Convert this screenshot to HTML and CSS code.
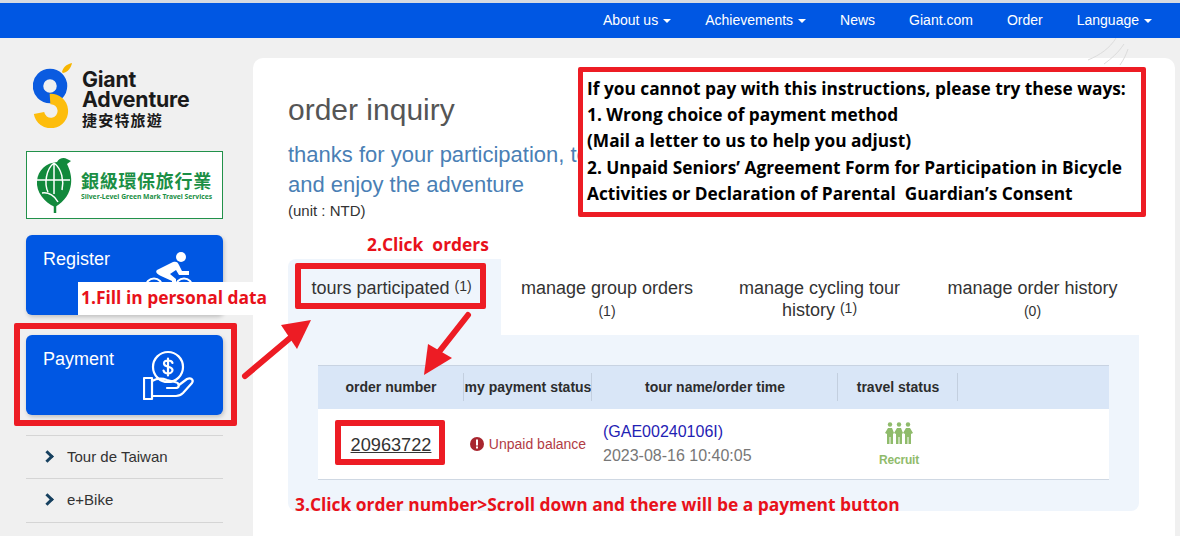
FILE: index.html
```html
<!DOCTYPE html>
<html lang="en">
<head>
    <meta charset="UTF-8">
    <title>order inquiry - Giant Adventure</title>
    <link rel="stylesheet" href="styles.css">
</head>
<body>
    <nav class="top-nav">
        <a href="#" class="caret">About us</a>
        <a href="#" class="caret">Achievements</a>
        <a href="#">News</a>
        <a href="#">Giant.com</a>
        <a href="#">Order</a>
        <a href="#" class="caret">Language</a>
    </nav>

    <svg class="nav-swirl" width="60" height="30" viewBox="0 0 60 30" fill="none" stroke="#dcdcdc" stroke-width="1">
        <path d="M46 0C40 10 30 17 18 22"/>
        <path d="M54 6C48 15 42 20 34 26"/>
        <path d="M58 11C56 17 54 21 50 27"/>
    </svg>

    <div class="page">
        <aside class="sidebar">
            <div class="logo">
                <svg class="logo-mark" width="39" height="66" viewBox="0 0 39 66" fill="none">
                    <path d="M29 10C30 5 34 2 39 1C38 6 35 10 30 11Z" fill="#f7b500"/>
                    <circle cx="17" cy="24" r="12" stroke="#0a5be0" stroke-width="10.500"/>
                    <path d="M17 37A12 12 0 1 1 6 51" stroke="#fdbd0d" stroke-width="10.500"/>
                </svg>
                <div class="logo-text">
                    <span class="logo-name">Giant<br>Adventure</span>
                    <span class="logo-zh">捷安特旅遊</span>
                </div>
            </div>

            <div class="green-badge">
                <svg width="36" height="56" viewBox="0 0 36 56">
                    <path d="M19 56V46" stroke="#12893c" stroke-width="2.500"/>
                    <path d="M19 50C8 45 0 35 1 24C2 13 10 6 21 5C23 1 28 0 31 2L35 4L31 7C34 13 36 20 35 27C34 36 29 44 19 50Z" fill="#12893c"/>
                    <path d="M1 23H34M18 6V37M18 6C10 12 8 27 12 35M18 6C26 12 28 24 26 33M6 36C13 35 19 39 22 45" stroke="#fff" stroke-width="1.500" fill="none"/>
                </svg>
                <div class="green-badge-text">
                    <strong>銀級環保旅行業</strong>
                    <small>Silver-Level Green Mark Travel Services</small>
                </div>
            </div>

            <a href="#" class="side-btn">
                <span>Register</span>
                <svg class="side-icon" width="52" height="52" viewBox="0 0 52 52" fill="#fff">
                    <circle cx="38" cy="7" r="5"/>
                    <path d="M14 20L30 12C33 11 35 12 36 15L39 21H46V25H36L33 20L27 24L33 29V40H29V31L18 26C14 24 12 22 14 20Z"/>
                    <circle cx="11" cy="37" r="8.500" fill="none" stroke="#fff" stroke-width="2"/>
                    <circle cx="41" cy="37" r="8.500" fill="none" stroke="#fff" stroke-width="2"/>
                </svg>
            </a>
            <a href="#" class="side-btn">
                <span>Payment</span>
                <svg class="side-icon" width="52" height="52" viewBox="0 0 52 52" fill="none" stroke="#fff" stroke-width="2.200" stroke-linejoin="round" stroke-linecap="round">
                    <circle cx="25" cy="17" r="15"/>
                    <path d="M29.500 13C29 11 27 10.500 25 10.500C22.500 10.500 21 12 21 13.500C21 18 29.500 15.500 29.500 20C29.500 22 27.500 23.500 25 23.500C22.500 23.500 21 22.500 20.500 20.500M25 8.500V25.500"/>
                    <path d="M1 28H9V49H1Z"/>
                    <path d="M9 31C14 28 19 28 24 30L32 32C37 33 37 38 32 38H24"/>
                    <path d="M36 35L44 29C48 27 51 30 49 33L40 43C38 45 36 46 33 46H9"/>
                </svg>
            </a>

            <ul class="side-list">
                <li>Tour de Taiwan</li>
                <li>e+Bike</li>
            </ul>
        </aside>

        <main class="main-card">
            <h1 class="page-title">order inquiry</h1>
            <p class="page-lead">thanks for your participation, to<br>and enjoy the adventure</p>
            <p class="unit-note">(unit : NTD)</p>

            <div class="tabs">
                <div class="tab active">tours participated <sup>(1)</sup></div>
                <div class="tab">manage group orders<br><sup>(1)</sup></div>
                <div class="tab">manage cycling tour history <sup>(1)</sup></div>
                <div class="tab">manage order history<br><sup>(0)</sup></div>
            </div>

            <div class="tab-panel">
                <div class="order-table">
                    <div class="cell head">order number</div>
                    <div class="cell head">my payment status</div>
                    <div class="cell head">tour name/order time</div>
                    <div class="cell head">travel status</div>
                    <div class="cell head blank"></div>

                    <div class="cell"><a href="#" class="order-no">20963722</a></div>
                    <div class="cell unpaid">
                        <svg width="14" height="14" viewBox="0 0 14 14"><circle cx="7" cy="7" r="7" fill="#a8262f"/><rect x="6" y="2.500" width="2" height="6" fill="#fff"/><rect x="6" y="9.500" width="2" height="2" fill="#fff"/></svg>
                        Unpaid balance
                    </div>
                    <div class="cell tour-cell">
                        <a href="#">(GAE00240106I)</a>
                        <span>2023-08-16 10:40:05</span>
                    </div>
                    <div class="cell recruit">
                        <svg width="28" height="23" viewBox="0 0 28 23" fill="#8fbb6b">
                            <circle cx="5" cy="2.500" r="2.200"/><circle cx="14" cy="2.500" r="2.200"/><circle cx="23" cy="2.500" r="2.200"/>
                            <path d="M3 6H7L9 11L8 12V22H5.500V15H4.500V22H2V12L0 11Z"/>
                            <path d="M12 6H16L18 11L17 12V22H14.500V15H13.500V22H11V12L9 11Z"/>
                            <path d="M21 6H25L28 11L26 12V22H23.500V15H22.500V22H20V12L18 11Z"/>
                        </svg>
                        <span>Recruit</span>
                    </div>
                    <div class="cell"></div>
                </div>
            </div>
        </main>
        <div class="right-edge"></div>
    </div>

    <!-- notes drawn over the screenshot -->
    <div class="note-frame frame-payment"></div>
    <div class="note-frame frame-tab"></div>
    <div class="note-frame frame-number"></div>
    <svg class="note-arrows" width="1180" height="536" viewBox="0 0 1180 536" fill="#ed1c24" stroke="#ed1c24" stroke-linecap="round">
        <path d="M245 376L296 333" stroke-width="6" fill="none"/>
        <path d="M311 320L281 325L297 349Z" stroke="none"/>
        <path d="M468 315L435 357" stroke-width="6" fill="none"/>
        <path d="M424 375L428 344L452 358Z" stroke="none"/>
    </svg>
    <div class="note-box">
        If you cannot pay with this instructions, please try these ways:<br>
        1. Wrong choice of payment method<br>
        (Mail a letter to us to help you adjust)<br>
        2. Unpaid Seniors’ Agreement Form for Participation in Bicycle<br>
        Activities or Declaration of Parental&nbsp; Guardian’s Consent
    </div>
    <div class="note-text note-one">1.Fill in personal data</div>
    <div class="note-text note-two">2.Click&nbsp; orders</div>
    <div class="note-text note-three">3.Click order number&gt;Scroll down and there will be a payment button</div>
</body>
</html>
```

FILE: styles.css
```css
html, body {
    height: 536px;
    overflow: hidden;
}
body {
    margin: 0;
    position: relative;
    background-color: #f0f0f0;
    color: #333;
    font-family: 'Liberation Sans', sans-serif;
    border-top: 3px solid #d6dbe2;
    box-sizing: border-box;
}
a {
    text-decoration: none;
}
.top-nav {
    display: flex;
    justify-content: flex-end;
    align-items: center;
    gap: 34px;
    height: 35px;
    padding-right: 28px;
    padding-bottom: 2px;
    box-sizing: border-box;
    background-color: #0057e3;
}
.top-nav a {
    color: #fff;
    font-size: 14px;
}
.caret::after {
    content: "";
    display: inline-block;
    margin-left: 5px;
    vertical-align: 2px;
    border-top: 4px solid #fff;
    border-left: 4px solid transparent;
    border-right: 4px solid transparent;
}
.nav-swirl {
    position: absolute;
    top: 35px;
    left: 1070px;
}
.page {
    display: flex;
    align-items: flex-start;
    padding: 20px 0 0 26px;
}
.sidebar {
    width: 197px;
    flex-shrink: 0;
}
.logo {
    display: flex;
    align-items: flex-start;
    gap: 10px;
    height: 66px;
    margin: 4px 0 23px 7px;
}
.logo-text {
    display: flex;
    flex-direction: column;
    margin-top: 7px;
    color: #1a1a1a;
    font-family: 'Inter', sans-serif;
    font-weight: 700;
}
.logo-name {
    font-size: 21.300px;
    line-height: 20px;
    letter-spacing: -0.2px;
}
.logo-zh {
    margin-top: 2px;
    font-family: 'Noto Sans CJK TC', sans-serif;
    font-size: 15px;
    line-height: 18px;
    letter-spacing: 1.200px;
}
.green-badge {
    display: flex;
    align-items: center;
    gap: 9px;
    height: 68px;
    padding-left: 9px;
    box-sizing: border-box;
    background-color: #fff;
    border: 1px solid #22914a;
}
.green-badge-text {
    display: flex;
    flex-direction: column;
    margin-top: -1px;
    color: #1b8f45;
}
.green-badge-text strong {
    font-family: 'Noto Sans CJK TC', sans-serif;
    font-size: 18px;
    line-height: 24px;
    letter-spacing: 0.700px;
}
.green-badge-text small {
    font-family: 'Noto Sans', sans-serif;
    font-size: 6.750px;
    font-weight: 700;
    white-space: nowrap;
}
.side-btn {
    display: block;
    position: relative;
    height: 80px;
    margin-top: 20px;
    padding: 14px 17px;
    box-sizing: border-box;
    background-color: #0057e3;
    border-radius: 6px;
    box-shadow: 1px 2px 4px rgba(0,0,0,0.2);
    color: #fff;
    font-size: 18px;
}
.green-badge + .side-btn {
    margin-top: 16px;
}
.side-icon {
    position: absolute;
    right: 28px;
    top: 15px;
}
.side-list {
    list-style: none;
    margin: 20px 0 0;
    padding: 0;
    border-top: 1px solid #d5d5d5;
}
.side-list li {
    position: relative;
    height: 42px;
    padding-left: 41px;
    border-bottom: 1px solid #d5d5d5;
    color: #333;
    font-size: 15px;
    line-height: 41px;
}
.side-list li:last-child {
    height: 43px;
}
.side-list li::before {
    content: "";
    position: absolute;
    left: 17px;
    top: 16px;
    width: 6px;
    height: 6px;
    border-top: 3px solid #16405f;
    border-right: 3px solid #16405f;
    transform: rotate(45deg);
}
.main-card {
    width: 922px;
    height: 500px;
    flex-shrink: 0;
    margin-left: 30px;
    padding: 35px 36px 0 35px;
    box-sizing: border-box;
    background-color: #fff;
    border-radius: 10px;
}
.page-title {
    margin: 0;
    color: #555;
    font-size: 30px;
    font-weight: 400;
    line-height: 34px;
}
.page-lead {
    margin: 13px 0 0;
    color: #4a7fb5;
    font-size: 22px;
    line-height: 30px;
    white-space: nowrap;
}
.unit-note {
    margin: 2px 0 0;
    color: #333;
    font-size: 15px;
    line-height: 18px;
}
.tabs {
    display: grid;
    grid-template-columns: 213px 212px 213px 213px;
    margin-top: 39px;
    height: 76px;
    background-color: #fff;
}
.tab {
    padding: 18px 14px 0;
    color: #333;
    font-size: 18px;
    line-height: 22px;
    text-align: center;
}
.tab sup {
    font-size: 14px;
    line-height: 0;
    vertical-align: 3px;
}
.tab br + sup {
    vertical-align: 0;
}
.tab.active {
    padding-left: 2px;
    padding-right: 8px;
    background-color: #eff5fc;
    border-top-left-radius: 8px;
}
.tab-panel {
    height: 176px;
    padding: 30px;
    box-sizing: border-box;
    background-color: #eff5fc;
    border-radius: 0 0 8px 8px;
}
.order-table {
    display: grid;
    grid-template-columns: 146px 128px 246px 120px 1fr;
    grid-template-rows: 44px 70px;
    background-color: #fff;
    border-bottom: 1px solid #cfd8e3;
}
.cell {
    display: flex;
    align-items: center;
    justify-content: center;
}
.cell.head {
    position: relative;
    padding-bottom: 2px;
    background-color: #d9e6f7;
    border-top: 1px solid #c8d3e2;
    box-sizing: border-box;
    color: #2d2d2d;
    font-size: 14px;
    font-weight: 700;
    white-space: nowrap;
}
.cell.head:not(.blank)::after {
    content: "";
    position: absolute;
    right: 0;
    top: 7px;
    bottom: 8px;
    width: 1px;
    background-color: #c3cfdf;
}
.order-no {
    margin-top: 2px;
    color: #333;
    font-size: 18.200px;
    text-decoration: underline;
}
.unpaid {
    gap: 5px;
    color: #b13b44;
    font-size: 14px;
}
.tour-cell {
    flex-direction: column;
    align-items: flex-start;
    padding-left: 11px;
    font-size: 16px;
    line-height: 24px;
}
.tour-cell a {
    color: #1f22b4;
}
.tour-cell span {
    color: #777;
}
.recruit {
    flex-direction: column;
    gap: 8px;
    padding-left: 2px;
    color: #8fbb6b;
    font-size: 12px;
    font-weight: 700;
    letter-spacing: -0.2px;
}
.right-edge {
    flex-grow: 1;
}
.note-frame {
    position: absolute;
    box-sizing: border-box;
    border: 6px solid #ed1c24;
    border-radius: 2px;
}
.frame-payment {
    left: 14px;
    top: 320px;
    width: 223px;
    height: 103px;
}
.frame-tab {
    left: 295px;
    top: 260px;
    width: 191px;
    height: 46px;
}
.frame-number {
    left: 335px;
    top: 417px;
    width: 110px;
    height: 45px;
}
.note-arrows {
    position: absolute;
    left: 0;
    top: -3px;
}
.note-box {
    position: absolute;
    left: 578px;
    top: 64px;
    width: 568px;
    height: 150px;
    padding: 4px 0 0 4px;
    box-sizing: border-box;
    background-color: #fff;
    border: 5px solid #ed1c24;
    border-radius: 2px;
    color: #000;
    font-family: 'Open Sans', sans-serif;
    font-size: 17.300px;
    font-weight: 700;
    line-height: 26.200px;
    white-space: nowrap;
}
.note-text {
    position: absolute;
    color: #e8111a;
    font-family: 'Open Sans', sans-serif;
    font-size: 17.400px;
    font-weight: 700;
    line-height: 24px;
    white-space: nowrap;
}
.note-one {
    left: 78px;
    top: 279px;
    width: 197px;
    height: 33px;
    padding: 3px 0 0 3px;
    box-sizing: border-box;
    background-color: #fff;
}
.note-two {
    left: 367px;
    top: 229px;
}
.note-three {
    left: 295px;
    top: 489px;
}
```
